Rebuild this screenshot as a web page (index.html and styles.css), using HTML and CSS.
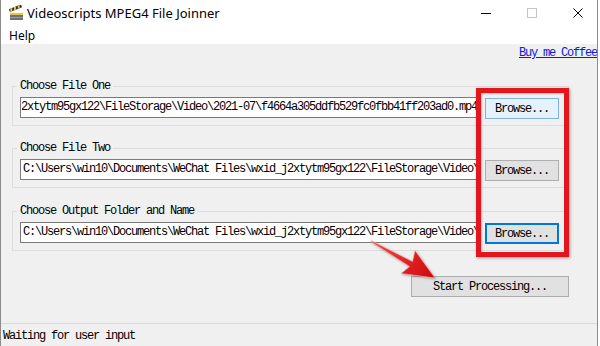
FILE: index.html
```html
<!DOCTYPE html>
<html>
<head>
<meta charset="utf-8">
<title>Videoscripts MPEG4 File Joinner</title>
<link rel="stylesheet" href="styles.css">
</head>
<body>
<div class="window">
  <div class="titlebar">
    <svg class="appicon" viewBox="0 0 16 16">
      <rect x="2" y="8" width="13" height="7" fill="#707070"/>
      <rect x="2" y="8" width="13" height="2" fill="#e6c43c"/>
      <rect x="2" y="12" width="13" height="1" fill="#9a9a9a"/>
      <g transform="rotate(-22 2 7)">
        <rect x="2" y="4" width="13" height="3" fill="#2e2e2e"/>
        <path d="M3.5 4h2l-1 3h-2z M7.5 4h2l-1 3h-2z M11.5 4h2l-1 3h-2z" fill="#f1cc3a"/>
      </g>
    </svg>
    <span class="title">Videoscripts MPEG4 File Joinner</span>
    <div class="controls">
      <div class="ctl"><svg width="10" height="10" viewBox="0 0 10 10"><path d="M0 5.5h10" stroke="#000" stroke-width="1"/></svg></div>
      <div class="ctl"><svg width="10" height="10" viewBox="0 0 10 10"><rect x="0.5" y="0.5" width="9" height="9" fill="none" stroke="#c4c4c4"/></svg></div>
      <div class="ctl"><svg width="10" height="10" viewBox="0 0 10 10"><path d="M0.5 0.5l9 9M9.5 0.5l-9 9" stroke="#000" stroke-width="1"/></svg></div>
    </div>
  </div>
  <div class="menubar"><span class="menuitem">Help</span></div>
  <div class="client">
    <div class="linkrow"><a class="link mono" href="#">Buy me Coffee</a></div>

    <fieldset class="group">
      <legend class="mono">Choose File One</legend>
      <div class="row">
        <div class="textbox end mono"><span class="val"><span class="ltr">C:\Users\win10\Documents\WeChat Files\wxid_j2xtytm95gx122\FileStorage\Video\2021-07\f4664a305ddfb529fc0fbb41ff203ad0.mp4</span></span></div>
        <button class="btn hover mono">Browse...</button>
      </div>
    </fieldset>

    <fieldset class="group second">
      <legend class="mono">Choose File Two</legend>
      <div class="row">
        <div class="textbox mono"><span class="val">C:\Users\win10\Documents\WeChat Files\wxid_j2xtytm95gx122\FileStorage\Video\2021-07\f4664a305ddfb529fc0fbb41ff203ad0.mp4</span></div>
        <button class="btn mono">Browse...</button>
      </div>
    </fieldset>

    <fieldset class="group third">
      <legend class="mono">Choose Output Folder and Name</legend>
      <div class="row">
        <div class="textbox mono"><span class="val">C:\Users\win10\Documents\WeChat Files\wxid_j2xtytm95gx122\FileStorage\Video\2021-07\joined.mp4</span></div>
        <button class="btn focus mono">Browse...</button>
      </div>
    </fieldset>

    <div class="actionrow"><button class="btn start mono">Start Processing...</button></div>
  </div>
  <div class="statusbar mono">Waiting for user input</div>

  <div class="highlight"></div>
  <svg class="arrow" width="597" height="346" viewBox="1 0 597 346">
    <defs>
      <linearGradient id="ag" x1="372" y1="240" x2="434" y2="277" gradientUnits="userSpaceOnUse">
        <stop offset="0" stop-color="#f24a44"/>
        <stop offset="1" stop-color="#d0070e"/>
      </linearGradient>
    </defs>
    <polygon points="371,240.5 412.5,261.5 415,250.5 435,278 401,273.5 409.5,266.5 371.5,242.2" fill="url(#ag)" stroke="#f7c0c0" stroke-width="0.6"/>
  </svg>
</div>
</body>
</html>
```

FILE: styles.css
```css
body {
  margin: 0;
  background: #ffffff;
}

.window {
  position: relative;
  width: 598px;
  height: 346px;
  box-sizing: border-box;
  border-left: 1px solid #8c8c8c;
  border-right: 1px solid #8c8c8c;
  background: #f0f0f0;
  display: flex;
  flex-direction: column;
  overflow: hidden;
}

.mono {
  font-family: "Liberation Mono", "DejaVu Sans Mono", monospace;
  font-size: 12px;
  letter-spacing: -1.2px;
  color: #000;
}

.titlebar {
  flex: none;
  height: 26px;
  background: #fff;
  display: flex;
  align-items: center;
}

.appicon {
  width: 16px;
  height: 16px;
  margin-left: 7px;
}

.title {
  margin-left: 3px;
  font-family: "Noto Sans", "Open Sans", sans-serif;
  font-size: 13px;
  color: #000;
}

.controls {
  margin-left: auto;
  margin-right: -4px;
  display: flex;
  height: 26px;
}

.ctl {
  width: 46px;
  display: flex;
  align-items: center;
  justify-content: center;
}

.menubar {
  flex: none;
  height: 18px;
  background: #fff;
  display: flex;
  align-items: center;
  padding-left: 8px;
}

.menuitem {
  font-family: "Noto Sans", "Open Sans", sans-serif;
  font-size: 12px;
  color: #000;
}

.client {
  flex: 1;
  padding: 3px 0 0 11px;
  display: flex;
  flex-direction: column;
}

.linkrow {
  display: flex;
  justify-content: flex-end;
  height: 12px;
  line-height: 12px;
}

.link {
  color: #0022e0;
  text-decoration: underline;
}

.group {
  margin: 21px 0 0 0;
  width: 557px;
  min-width: 0;
  box-sizing: border-box;
  border: 1px solid #dcdcdc;
  padding: 5px 9px 6px 7px;
}

.group.second {
  margin-top: 16px;
}

.group.third {
  margin-top: 17px;
}

.group legend {
  padding: 0 3px;
  margin-left: -3px;
  line-height: 12px;
  height: 12px;
}

.row {
  display: flex;
  gap: 6px;
  align-items: flex-start;
}

.textbox {
  width: 459px;
  height: 21px;
  box-sizing: border-box;
  border: 1px solid #7a7a7a;
  background: #fff;
  display: flex;
  align-items: center;
  padding: 0 1px 0 2px;
}

.textbox .val {
  display: block;
  flex: 1 1 auto;
  min-width: 0;
  overflow: hidden;
  white-space: nowrap;
  line-height: 15px;
}

.textbox.end {
  padding: 0 1px 0 1px;
}

.textbox.end .val {
  direction: rtl;
  text-align: right;
}

.textbox .ltr {
  direction: ltr;
  unicode-bidi: isolate;
}

.btn {
  width: 74px;
  height: 21px;
  margin-top: 1px;
  box-sizing: border-box;
  border: 1px solid #adadad;
  background: #e1e1e1;
  padding: 0;
  text-align: center;
}

.btn.hover {
  background: #e5f1fb;
  border-color: #7fb2e5;
}

.btn.focus {
  border-color: #0078d7;
  box-shadow: inset 0 0 0 1px #0078d7;
}

.actionrow {
  width: 557px;
  display: flex;
  justify-content: flex-end;
  margin-top: 25px;
}

.btn.start {
  width: 158px;
  margin-top: 0;
}

.statusbar {
  flex: none;
  height: 23px;
  box-sizing: border-box;
  border-top: 1px solid #d9d9d9;
  display: flex;
  align-items: center;
  padding-left: 2px;
  padding-top: 2px;
}

.highlight {
  position: absolute;
  left: 475px;
  top: 88px;
  width: 93px;
  height: 169px;
  box-sizing: border-box;
  border: 5px solid #e2161c;
  box-shadow: 1px 1px 3px rgba(0, 0, 0, 0.35), inset 1px 1px 2px rgba(0, 0, 0, 0.2);
}

.arrow {
  position: absolute;
  left: 0;
  top: 0;
  pointer-events: none;
  filter: drop-shadow(1px 1px 1px rgba(0, 0, 0, 0.3));
}
```
